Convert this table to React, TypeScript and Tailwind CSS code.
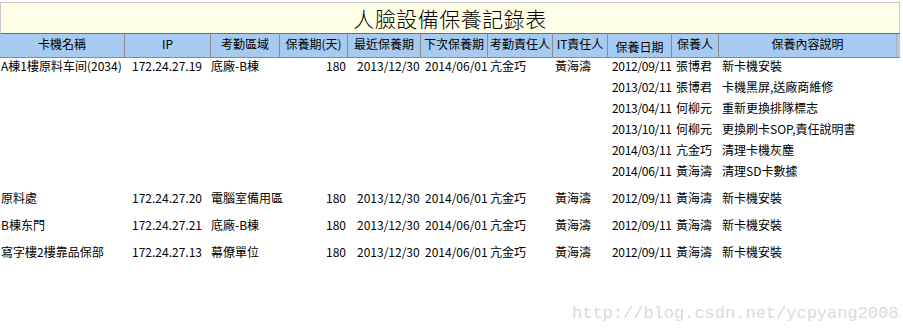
import React from "react";

const cols = "grid-cols-[125px_86px_69px_68px_73px_67px_65px_55px_64px_47px_178px]";

const headers = [
  "卡機名稱",
  "IP",
  "考勤區域",
  "保養期(天)",
  "最近保養期",
  "下次保養期",
  "考勤責任人",
  "IT責任人",
  "保養日期",
  "保養人",
  "保養內容說明",
];

type Rec = {
  name: string;
  ip: string;
  area: string;
  period: string;
  last: string;
  next: string;
  att: string;
  it: string;
  logs: [string, string, string][];
};

const data: Rec[] = [
  {
    name: "A棟1樓原料车间(2034)",
    ip: "172.24.27.19",
    area: "底廠-B棟",
    period: "180",
    last: "2013/12/30",
    next: "2014/06/01",
    att: "亢金巧",
    it: "黃海濤",
    logs: [
      ["2012/09/11", "張博君", "新卡機安裝"],
      ["2013/02/11", "張博君", "卡機黑屏,送廠商維修"],
      ["2013/04/11", "何柳元", "重新更換排隊標志"],
      ["2013/10/11", "何柳元", "更換刷卡SOP,責任說明書"],
      ["2014/03/11", "亢金巧", "清理卡機灰塵"],
      ["2014/06/11", "黃海濤", "清理SD卡數據"],
    ],
  },
  {
    name: "原料處",
    ip: "172.24.27.20",
    area: "電腦室備用區",
    period: "180",
    last: "2013/12/30",
    next: "2014/06/01",
    att: "亢金巧",
    it: "黃海濤",
    logs: [["2012/09/11", "黃海濤", "新卡機安裝"]],
  },
  {
    name: "B棟东門",
    ip: "172.24.27.21",
    area: "底廠-B棟",
    period: "180",
    last: "2013/12/30",
    next: "2014/06/01",
    att: "亢金巧",
    it: "黃海濤",
    logs: [["2012/09/11", "黃海濤", "新卡機安裝"]],
  },
  {
    name: "寫字樓2樓靠品保部",
    ip: "172.24.27.13",
    area: "幕僚單位",
    period: "180",
    last: "2013/12/30",
    next: "2014/06/01",
    att: "亢金巧",
    it: "黃海濤",
    logs: [["2012/09/11", "黃海濤", "新卡機安裝"]],
  },
];

const font = {
  fontFamily: '"Noto Sans CJK TC", "Noto Sans CJK SC", sans-serif',
};

export default function App() {
  return (
    <div className="relative w-[903px] h-[336px] bg-white overflow-hidden text-black" style={font}>
      <div className="pt-[2px] pr-[3px]">
        <div className="h-[32px] bg-[#fffee6] border border-[#c8c8c8] border-b-[#6e6e6e] flex items-start justify-center pt-[3px] text-[21px] leading-[24px] font-light tracking-[0.5px]">
          人臉設備保養記錄表
        </div>
        <div className={`grid ${cols} h-[24px] bg-[#a6caf0] border-b border-[#8a8a8a] text-[12px] leading-none`}>
          {headers.map((h, i) => (
            <div
              key={i}
              className={`flex justify-center border-r border-[#8c8c8c] ${
                i === 8 ? "pt-[7px]" : "pt-[4px]"
              } ${i === 10 ? "border-r-[#b0b0b0]" : ""}`}
            >
              {h}
            </div>
          ))}
        </div>
      </div>
      <div className="flex flex-col text-[12px] leading-[16px]">
        {data.map((r, i) => (
          <div key={i} className={`grid ${cols} pb-[6px]`}>
            <div className="pl-[1px] whitespace-nowrap">{r.name}</div>
            <div className="pl-[7px]">{r.ip}</div>
            <div className="whitespace-nowrap">{r.area}</div>
            <div className="text-right pr-[2px]">{r.period}</div>
            <div className="pl-[9px]">{r.last}</div>
            <div className="pl-[4px]">{r.next}</div>
            <div className="pl-[2px]">{r.att}</div>
            <div className="pl-[2px]">{r.it}</div>
            <div className="col-span-3 flex flex-col">
              {r.logs.map((l, j) => (
                <div key={j} className="grid grid-cols-[64px_47px_178px] h-[21px]">
                  <div className="pl-[4px] whitespace-nowrap tracking-[-0.3px]">{l[0]}</div>
                  <div className="pl-[4px] whitespace-nowrap">{l[1]}</div>
                  <div className="pl-[3px] whitespace-nowrap">{l[2]}</div>
                </div>
              ))}
            </div>
          </div>
        ))}
      </div>
      <div
        className="absolute left-[572px] top-[304px] text-[17px] leading-[20px] text-[#dadada] whitespace-nowrap"
        style={{ fontFamily: '"Liberation Mono", monospace' }}
      >
        http://blog.csdn.net/ycpyang2008
      </div>
    </div>
  );
}
